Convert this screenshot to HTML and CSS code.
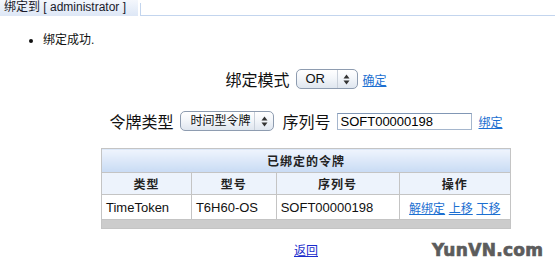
FILE: index.html
```html
<!DOCTYPE html>
<html>
<head>
<meta charset="utf-8">
<link rel="stylesheet" href="styles.css">
</head>
<body>
<div class="tabbar">
  <div class="tab">绑定到 [ administrator ]</div>
  <div class="tabline"></div>
</div>
<ul class="msg"><li>绑定成功.</li></ul>
<div class="main">
  <div class="row row1">
    <span class="label">绑定模式</span>
    <span class="sel sel-or"><span class="sel-text">OR</span><span class="sel-arrow"><svg width="7" height="11" viewBox="0 0 7 11"><path d="M3.5 0.5 L6.5 4.5 L0.5 4.5 Z M3.5 10.5 L6.5 6.5 L0.5 6.5 Z" fill="#333"/></svg></span></span>
    <a class="link" href="#">确定</a>
  </div>
  <div class="row row2">
    <span class="label">令牌类型</span>
    <span class="sel sel-type"><span class="sel-text small">时间型令牌</span><span class="sel-arrow"><svg width="7" height="11" viewBox="0 0 7 11"><path d="M3.5 0.5 L6.5 4.5 L0.5 4.5 Z M3.5 10.5 L6.5 6.5 L0.5 6.5 Z" fill="#333"/></svg></span></span>
    <span class="label">序列号</span>
    <span class="input">SOFT00000198</span>
    <a class="link" href="#">绑定</a>
  </div>
  <table class="tokens">
    <tr><th class="title" colspan="4">已绑定的令牌</th></tr>
    <tr class="heads"><th class="c1">类型</th><th class="c2">型号</th><th class="c3">序列号</th><th class="c4">操作</th></tr>
    <tr class="data"><td>TimeToken</td><td>T6H60-OS</td><td>SOFT00000198</td><td class="ops"><a class="link" href="#">解绑定</a> <a class="link" href="#">上移</a> <a class="link" href="#">下移</a></td></tr>
    <tr class="foot"><td colspan="4"></td></tr>
  </table>
  <div class="back"><a class="link-back" href="#">返回</a></div>
</div>
<div class="watermark">YunVN.com</div>
</body>
</html>
```
FILE: styles.css
```css
html, body {
  margin: 0;
  padding: 0;
  background: #fff;
}
body {
  width: 558px;
  height: 271px;
  position: relative;
  overflow: hidden;
  font-family: "Liberation Sans", "Noto Sans CJK SC", sans-serif;
  color: #111;
}
.tabbar {
  display: flex;
  height: 16px;
}
.tab {
  width: 134px;
  padding-left: 4px;
  height: 16px;
  line-height: 15px;
  font-size: 12px;
  color: #1a1a2a;
  background: linear-gradient(to bottom, #f4f7fc, #dde7f6);
  white-space: nowrap;
}
.tabline {
  width: 414px;
  margin-left: 2px;
  margin-top: 3px;
  height: 12px;
  border-left: 1px solid #c3d5ee;
  border-bottom: 1px solid #c3d5ee;
}
.msg {
  margin: 16px 0 0 0;
  padding-left: 43px;
  font-size: 12px;
  line-height: 16px;
}
.msg li {
  list-style: disc;
}
.main {
  padding-left: 54px;
  display: flex;
  flex-direction: column;
  align-items: center;
}
.row {
  display: flex;
  align-items: center;
  white-space: nowrap;
}
.row1 {
  margin-top: 20px;
  height: 22px;
}
.row2 {
  margin-top: 20px;
  height: 22px;
}
.label {
  font-size: 16px;
  color: #111;
}
.sel {
  display: inline-flex;
  align-items: stretch;
  height: 18px;
  border: 1px solid #8e9cb0;
  border-radius: 5px;
  background: linear-gradient(to bottom, #ffffff 0%, #f3f6fa 45%, #dfe6ef 100%);
  box-sizing: content-box;
}
.sel-text {
  font-size: 13px;
  line-height: 18px;
  padding-left: 9px;
  color: #111;
}
.sel-text.small {
  font-size: 12px;
  padding-left: 9px;
}
.sel-arrow {
  display: flex;
  align-items: center;
  justify-content: center;
  width: 18px;
  border-left: 1px solid #c9d0da;
}
.sel-or {
  width: 60px;
  margin-left: 6px;
  margin-right: 5px;
}
.sel-or .sel-text {
  width: 31px;
}
.sel-type {
  width: 92px;
  margin-left: 7px;
  margin-right: 8px;
}
.sel-type .sel-text {
  width: 64px;
}
.input {
  display: inline-block;
  width: 130px;
  height: 15px;
  margin-left: 6px;
  margin-right: 7px;
  padding-left: 3px;
  font-size: 13px;
  line-height: 15px;
  border: 1px solid #a5b6cd;
  border-top-color: #8197b5;
  color: #000;
}
.link {
  font-size: 12px;
  color: #1c6fd1;
  text-decoration: underline;
}
.tokens {
  margin-top: 16px;
  width: 410px;
  border-collapse: collapse;
  border: 1px solid #c4c4c4;
  font-size: 13px;
}
.tokens th, .tokens td {
  border: 1px solid #c4c4c4;
  padding: 0;
}
.tokens .title {
  height: 23px;
  text-align: center;
  font-size: 12px;
  letter-spacing: 1px;
  font-weight: bold;
  color: #222;
  background: linear-gradient(to bottom, #eff4fd, #c8dbf4);
}
.tokens .heads th {
  height: 21px;
  font-size: 12px;
  letter-spacing: 1px;
  font-weight: bold;
  color: #222;
  background: #edf3fc;
}
.c1 { width: 89px; }
.c2 { width: 84px; }
.c3 { width: 122px; }
.c4 { width: 111px; }
.tokens .data td {
  height: 24px;
  padding-left: 4px;
  color: #111;
}
.tokens .data td.ops {
  text-align: center;
  padding-left: 0;
}
.tokens .foot td {
  height: 8px;
  background: #cccccc;
}
.back {
  margin-top: 12px;
  font-size: 12px;
}
.link-back {
  color: #1a2ccc;
  text-decoration: underline;
}
.watermark {
  position: absolute;
  left: 432px;
  top: 240px;
  font-family: "DejaVu Sans", sans-serif;
  font-weight: bold;
  font-size: 17px;
  letter-spacing: 0.3px;
  color: #5c5c5c;
  -webkit-text-stroke: 0.7px #5c5c5c;
}
```
